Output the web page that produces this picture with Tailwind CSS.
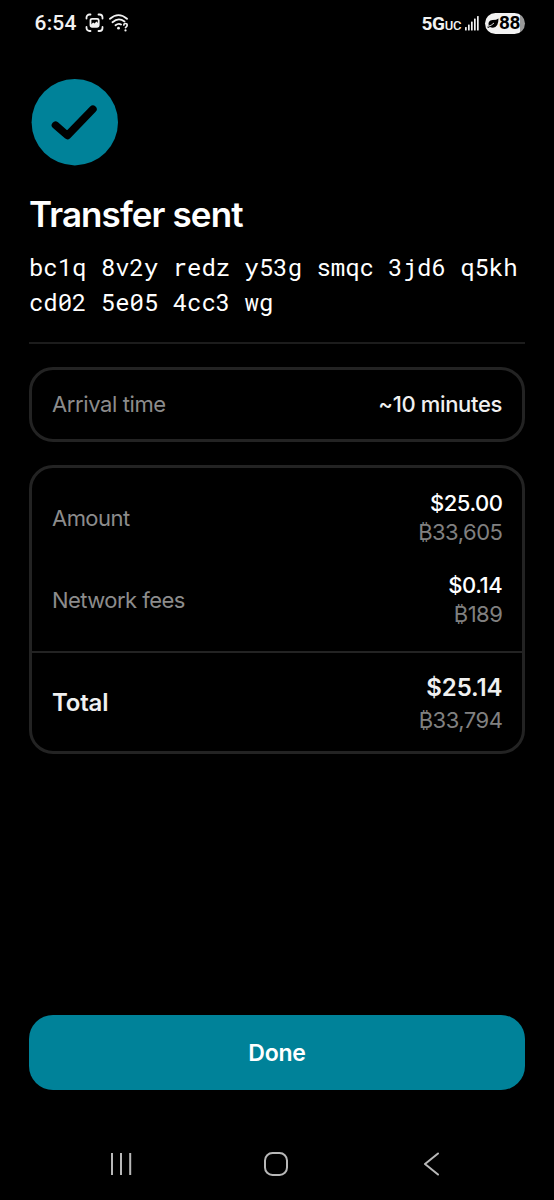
<!DOCTYPE html>
<html lang="en">
<head>
<meta charset="utf-8">
<meta name="viewport" content="width=device-width, initial-scale=1">
<title>Transfer sent</title>
<script src="https://cdn.jsdelivr.net/npm/@tailwindcss/browser@4"></script>
</head>
<body class="bg-black font-['Inter',sans-serif] text-white">
<div class="flex h-[1200px] w-[554px] flex-col overflow-hidden bg-black">
  <header class="flex h-[46px] shrink-0 items-center justify-between pl-[34px] pr-[29px] font-['Roboto',sans-serif] text-[#f2f2f2]">
    <div class="flex items-center">
      <span class="w-[51px] whitespace-nowrap pl-[0.5px] text-[21px] leading-none font-medium tracking-[0.2px]">6:54</span>
      <svg class="h-[20px] w-[20px]" viewBox="0 0 20 20" fill="none" stroke="currentColor" stroke-width="1.8" stroke-linecap="round"><path d="M1.500 5.500V4.500a3 3 0 0 1 3-3h1M13.500 1.500h1a3 3 0 0 1 3 3v1M17.500 14v1a3 3 0 0 1-3 3h-1M5.500 18h-1a3 3 0 0 1-3-3v-1"/><rect x="5.500" y="5.800" width="8.200" height="8" rx="1.500"/><path d="M6 11.500l2.200-2 1.300 1 2-2 2 2V13.500H6z" fill="currentColor" stroke="none"/></svg>
      <svg class="ml-[4px] h-[20px] w-[22px]" viewBox="0 0 22 20" fill="none" stroke="currentColor" stroke-width="1.800" stroke-linecap="round"><path d="M1 5.800Q9.500 -1.500 18 5.800M3.500 9.200Q9.500 4 15.500 8.500M6.500 12.300Q9.500 10 12 11.500"/><circle cx="9.500" cy="15.200" r="1.400" fill="currentColor" stroke="none"/><path d="M14.800 12Q14.800 10.500 16.500 10.500T18.200 12Q18.200 13.300 16.500 14.600" stroke-width="1.700"/><circle cx="16.500" cy="17.400" r="1.100" fill="currentColor" stroke="none"/></svg>
    </div>
    <div class="flex items-center">
      <span class="flex w-[43px] items-baseline whitespace-nowrap pl-[0.5px] leading-none"><span class="text-[19px] font-bold tracking-[-0.3px]">5G</span><span class="text-[13px] font-medium tracking-[-0.3px]">UC</span></span>
      <svg class="ml-[1px] h-[16px] w-[15px]" viewBox="0 0 15 16" fill="currentColor"><rect x="0" y="12" width="1.700" height="3.500" rx=".5"/><rect x="3" y="9.500" width="1.700" height="6" rx=".5"/><rect x="6" y="6.500" width="1.700" height="9" rx=".5"/><rect x="9" y="3.500" width="1.700" height="12" rx=".5"/><rect x="12" y="1" width="1.700" height="14.500" rx=".5"/></svg>
      <div class="ml-[5px] flex h-[21px] w-[40px] items-center rounded-full bg-linear-to-r from-[#f2f2f2] from-88% to-[#999] to-88% pl-[2px] text-black">
        <svg class="h-[11px] w-[12px]" viewBox="0 0 12 11" fill="currentColor"><path d="M11.500 0.500Q11.500 9.500 6 9.700 4 9.700 3 9L1 10 0.300 9 1.700 7.600Q0.500 2.500 5.500 2Q9.500 2 11.500 0.500Z"/><path d="M1 8.400Q4.500 7.500 7 5" stroke="#f2f2f2" stroke-width=".9" fill="none"/></svg>
        <span class="pb-[1px] text-[19px] leading-none font-bold tracking-[-0.3px]">88</span>
      </div>
    </div>
  </header>

  <main class="flex flex-1 flex-col px-[29px] pt-[33px]">
    <svg class="ml-[2px] h-[87px] w-[87px] shrink-0" viewBox="0 0 87 87" fill="none"><circle cx="43.800" cy="43.200" r="43.200" fill="#008299"/><path d="M24.500 46.200L36.400 56.500 61.900 30.200" stroke="#000" stroke-width="7.600" stroke-linecap="round" stroke-linejoin="round"/></svg>
    <h1 class="mt-[26px] h-[44px] text-[35px] leading-[44px] font-semibold tracking-[-0.9px] whitespace-nowrap">Transfer sent</h1>
    <p class="mt-[14px] h-[70px] font-['Roboto_Mono','Liberation_Mono',monospace] text-[24px] leading-[35px] tracking-[-0.03px] whitespace-nowrap">bc1q 8v2y redz y53g smqc 3jd6 q5kh<br>cd02 5e05 4cc3 wg</p>
    <hr class="mt-[22px] h-[2px] border-0 bg-[#1c1c1c]">

    <section class="mt-[23px] flex h-[75px] shrink-0 items-center justify-between rounded-[24px] border-[3px] border-[#232323] px-[20px] text-[22px]">
      <span class="font-normal tracking-[-0.4px] text-[#8c8c8c]">Arrival time</span>
      <span class="font-medium tracking-[-0.35px] text-[#f0f0f0]">~10 minutes</span>
    </section>

    <section class="mt-[23px] flex h-[289px] shrink-0 flex-col rounded-[24px] border-[3px] border-[#232323] text-[22px]">
      <div class="flex h-[183px] flex-col gap-[24px] px-[20px] pt-[20px]">
        <div class="flex items-center justify-between">
          <span class="pt-[1px] font-normal tracking-[-0.55px] text-[#8c8c8c]">Amount</span>
          <div class="mr-[-0.4px] flex flex-col items-end pt-[1px] leading-[29px]"><span class="font-medium tracking-[-0.5px]">$25.00</span><span class="font-normal tracking-[-0.5px] text-[#808080]">₿33,605</span></div>
        </div>
        <div class="flex items-center justify-between">
          <span class="font-normal tracking-[-0.55px] text-[#8c8c8c]">Network fees</span>
          <div class="mr-[-0.4px] flex flex-col items-end leading-[29px]"><span class="font-medium tracking-[-0.4px]">$0.14</span><span class="font-normal tracking-[-0.5px] text-[#808080]">₿189</span></div>
        </div>
      </div>
      <div class="flex flex-1 items-center justify-between border-t-2 border-[#232323] px-[20px] pt-[3px]">
        <span class="pb-[1px] text-[24px] font-semibold tracking-[-0.2px] text-[#f0f0f0]">Total</span>
        <div class="mr-[-0.4px] flex flex-col items-end leading-[32px]"><span class="text-[24px] font-semibold tracking-[-0.1px] text-[#f0f0f0]">$25.14</span><span class="font-normal tracking-[-0.5px] text-[#808080]">₿33,794</span></div>
      </div>
    </section>

    <button class="mt-auto mb-[38px] h-[75px] shrink-0 rounded-[24px] bg-[#008299] pt-[2px] text-[23px] font-semibold tracking-[-0.2px]">Done</button>
  </main>

  <nav class="flex h-[72px] shrink-0 items-center text-[#b8b8b8]">
    <svg class="ml-[109px] h-[24px] w-[24px]" viewBox="0 0 24 24" fill="none" stroke="currentColor" stroke-width="2"><path d="M3 1v22M12 1v22M21.200 1v22"/></svg>
    <svg class="ml-[131px] h-[24px] w-[24px]" viewBox="0 0 24 24" fill="none" stroke="currentColor" stroke-width="2"><rect x="1" y="1" width="22" height="22" rx="7.500"/></svg>
    <svg class="ml-[135px] h-[24px] w-[16px]" viewBox="0 0 16 24" fill="none" stroke="currentColor" stroke-width="2" stroke-linecap="round" stroke-linejoin="round"><path d="M15 1.500L2 12 15 22.500"/></svg>
  </nav>
</div>
</body>
</html>
